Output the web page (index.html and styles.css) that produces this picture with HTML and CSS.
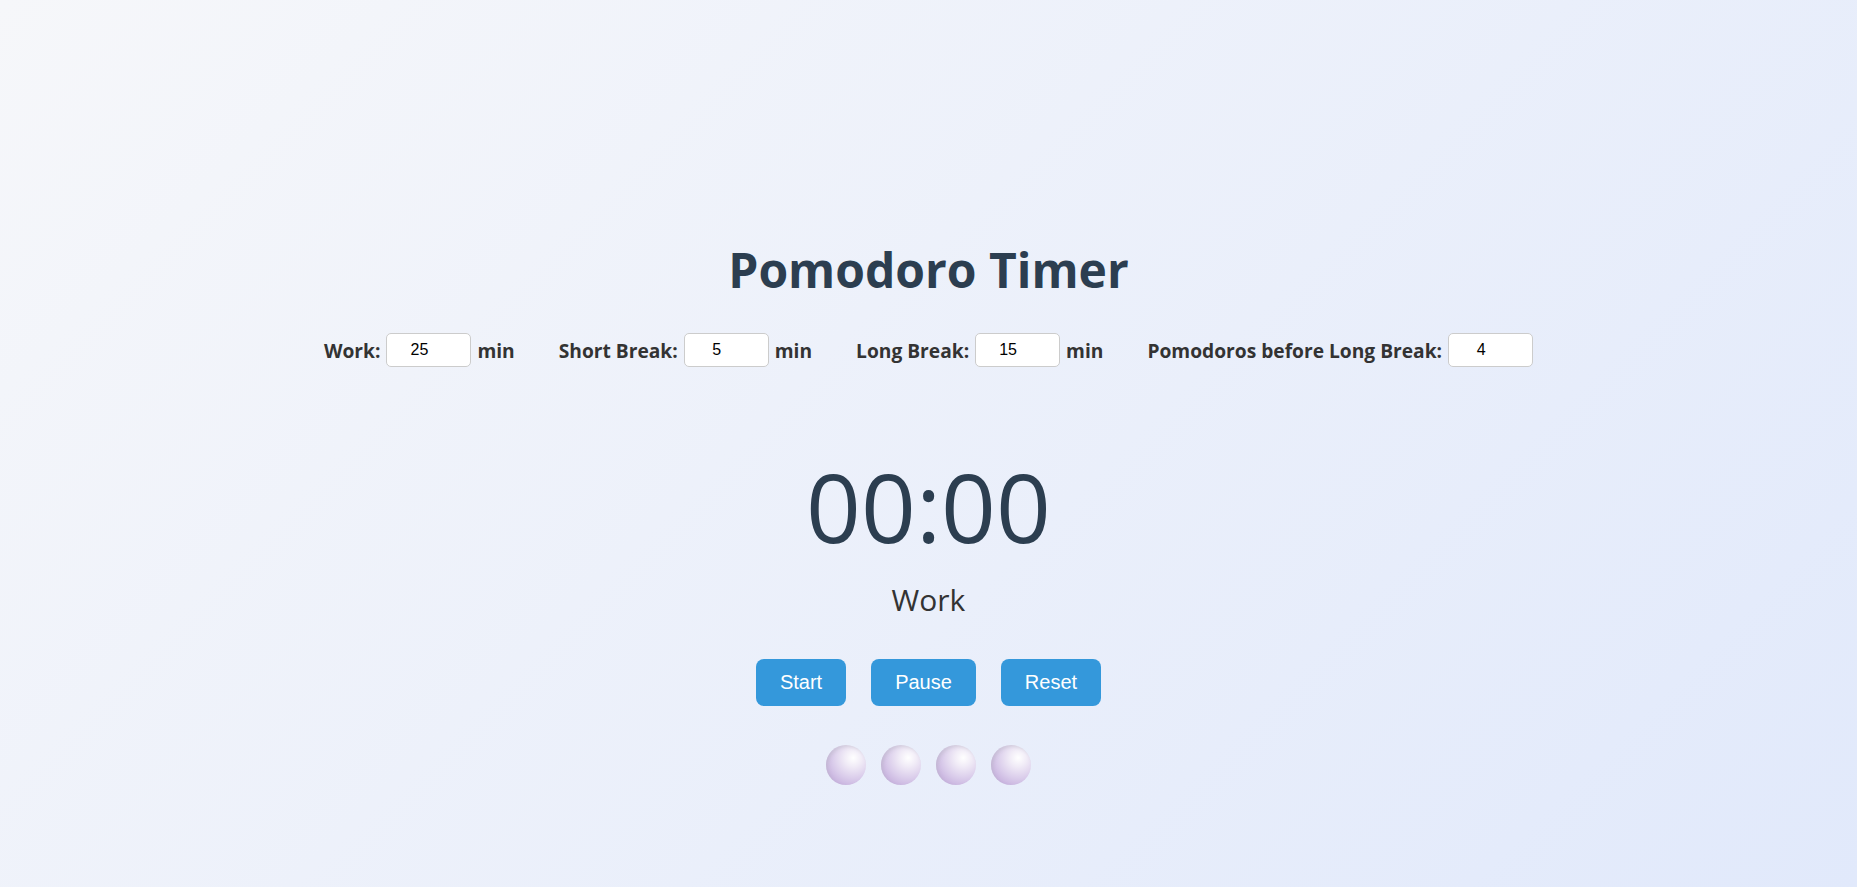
FILE: index.html
```html
<!DOCTYPE html>
<html lang="en">
<head>
<meta charset="utf-8">
<title>Pomodoro Timer</title>
<link rel="stylesheet" href="styles.css">
</head>
<body>
<main class="app">
  <h1 class="title">Pomodoro Timer</h1>
  <div class="settings">
    <div class="setting">
      <label class="setting-label" for="work">Work:</label>
      <input class="setting-input" id="work" type="number" value="25">
      <span class="setting-unit">min</span>
    </div>
    <div class="setting">
      <label class="setting-label" for="short">Short Break:</label>
      <input class="setting-input" id="short" type="number" value="5">
      <span class="setting-unit">min</span>
    </div>
    <div class="setting">
      <label class="setting-label" for="long">Long Break:</label>
      <input class="setting-input" id="long" type="number" value="15">
      <span class="setting-unit">min</span>
    </div>
    <div class="setting">
      <label class="setting-label" for="count">Pomodoros before Long Break:</label>
      <input class="setting-input" id="count" type="number" value="4">
    </div>
  </div>
  <div class="timer">00:00</div>
  <div class="mode">Work</div>
  <div class="controls">
    <button class="btn">Start</button>
    <button class="btn">Pause</button>
    <button class="btn">Reset</button>
  </div>
  <div class="tracker">
    <span class="dot"></span>
    <span class="dot"></span>
    <span class="dot"></span>
    <span class="dot"></span>
  </div>
</main>
</body>
</html>
```

FILE: styles.css
```css
html, body {
  margin: 0;
  height: 100%;
}

body {
  background: linear-gradient(135deg, #f6f7fa 0%, #e1e9fb 100%);
  font-family: "Open Sans", "Noto Sans", sans-serif;
  color: #333;
}

.app {
  display: flex;
  flex-direction: column;
  align-items: center;
  padding-top: 238px;
}

.title {
  margin: 0;
  font-size: 48px;
  line-height: 64px;
  font-weight: 700;
  color: #2c3e50;
}

.settings {
  display: flex;
  align-items: center;
  gap: 44px;
  margin-top: 31px;
}

.setting {
  display: flex;
  align-items: center;
  gap: 6px;
}

.setting-label,
.setting-unit {
  font-size: 19.2px;
  font-weight: 700;
  color: #333;
}

.setting-input {
  box-sizing: border-box;
  width: 85px;
  height: 34px;
  padding: 6px 10px 6px 6px;
  border: 1px solid #ccc;
  border-radius: 5px;
  background: #fff;
  font-family: "Liberation Sans", Arial, sans-serif;
  font-size: 16px;
  text-align: center;
  color: #000;
}

.timer {
  margin-top: 91px;
  font-size: 96px;
  line-height: 96px;
  font-weight: 400;
  color: #2c3e50;
}

.mode {
  margin-top: 28px;
  font-size: 30px;
  line-height: 36px;
  color: #333;
}

.controls {
  display: flex;
  gap: 25px;
  margin-top: 41px;
}

.btn {
  padding: 12px 24px;
  border: none;
  border-radius: 8px;
  background: #3498db;
  color: #fff;
  font-family: "Liberation Sans", Arial, sans-serif;
  font-size: 20px;
  line-height: 23px;
  cursor: pointer;
}

.tracker {
  display: flex;
  gap: 15px;
  margin-top: 39px;
}

.dot {
  width: 40px;
  height: 40px;
  border-radius: 50%;
  background: radial-gradient(circle at 68% 32%, #ffffff 0%, #f1ecf7 22%, #d9cbea 55%, #b79bd3 100%);
  box-shadow: inset 2px 2px 3px rgba(180, 180, 190, 0.35);
}
```
